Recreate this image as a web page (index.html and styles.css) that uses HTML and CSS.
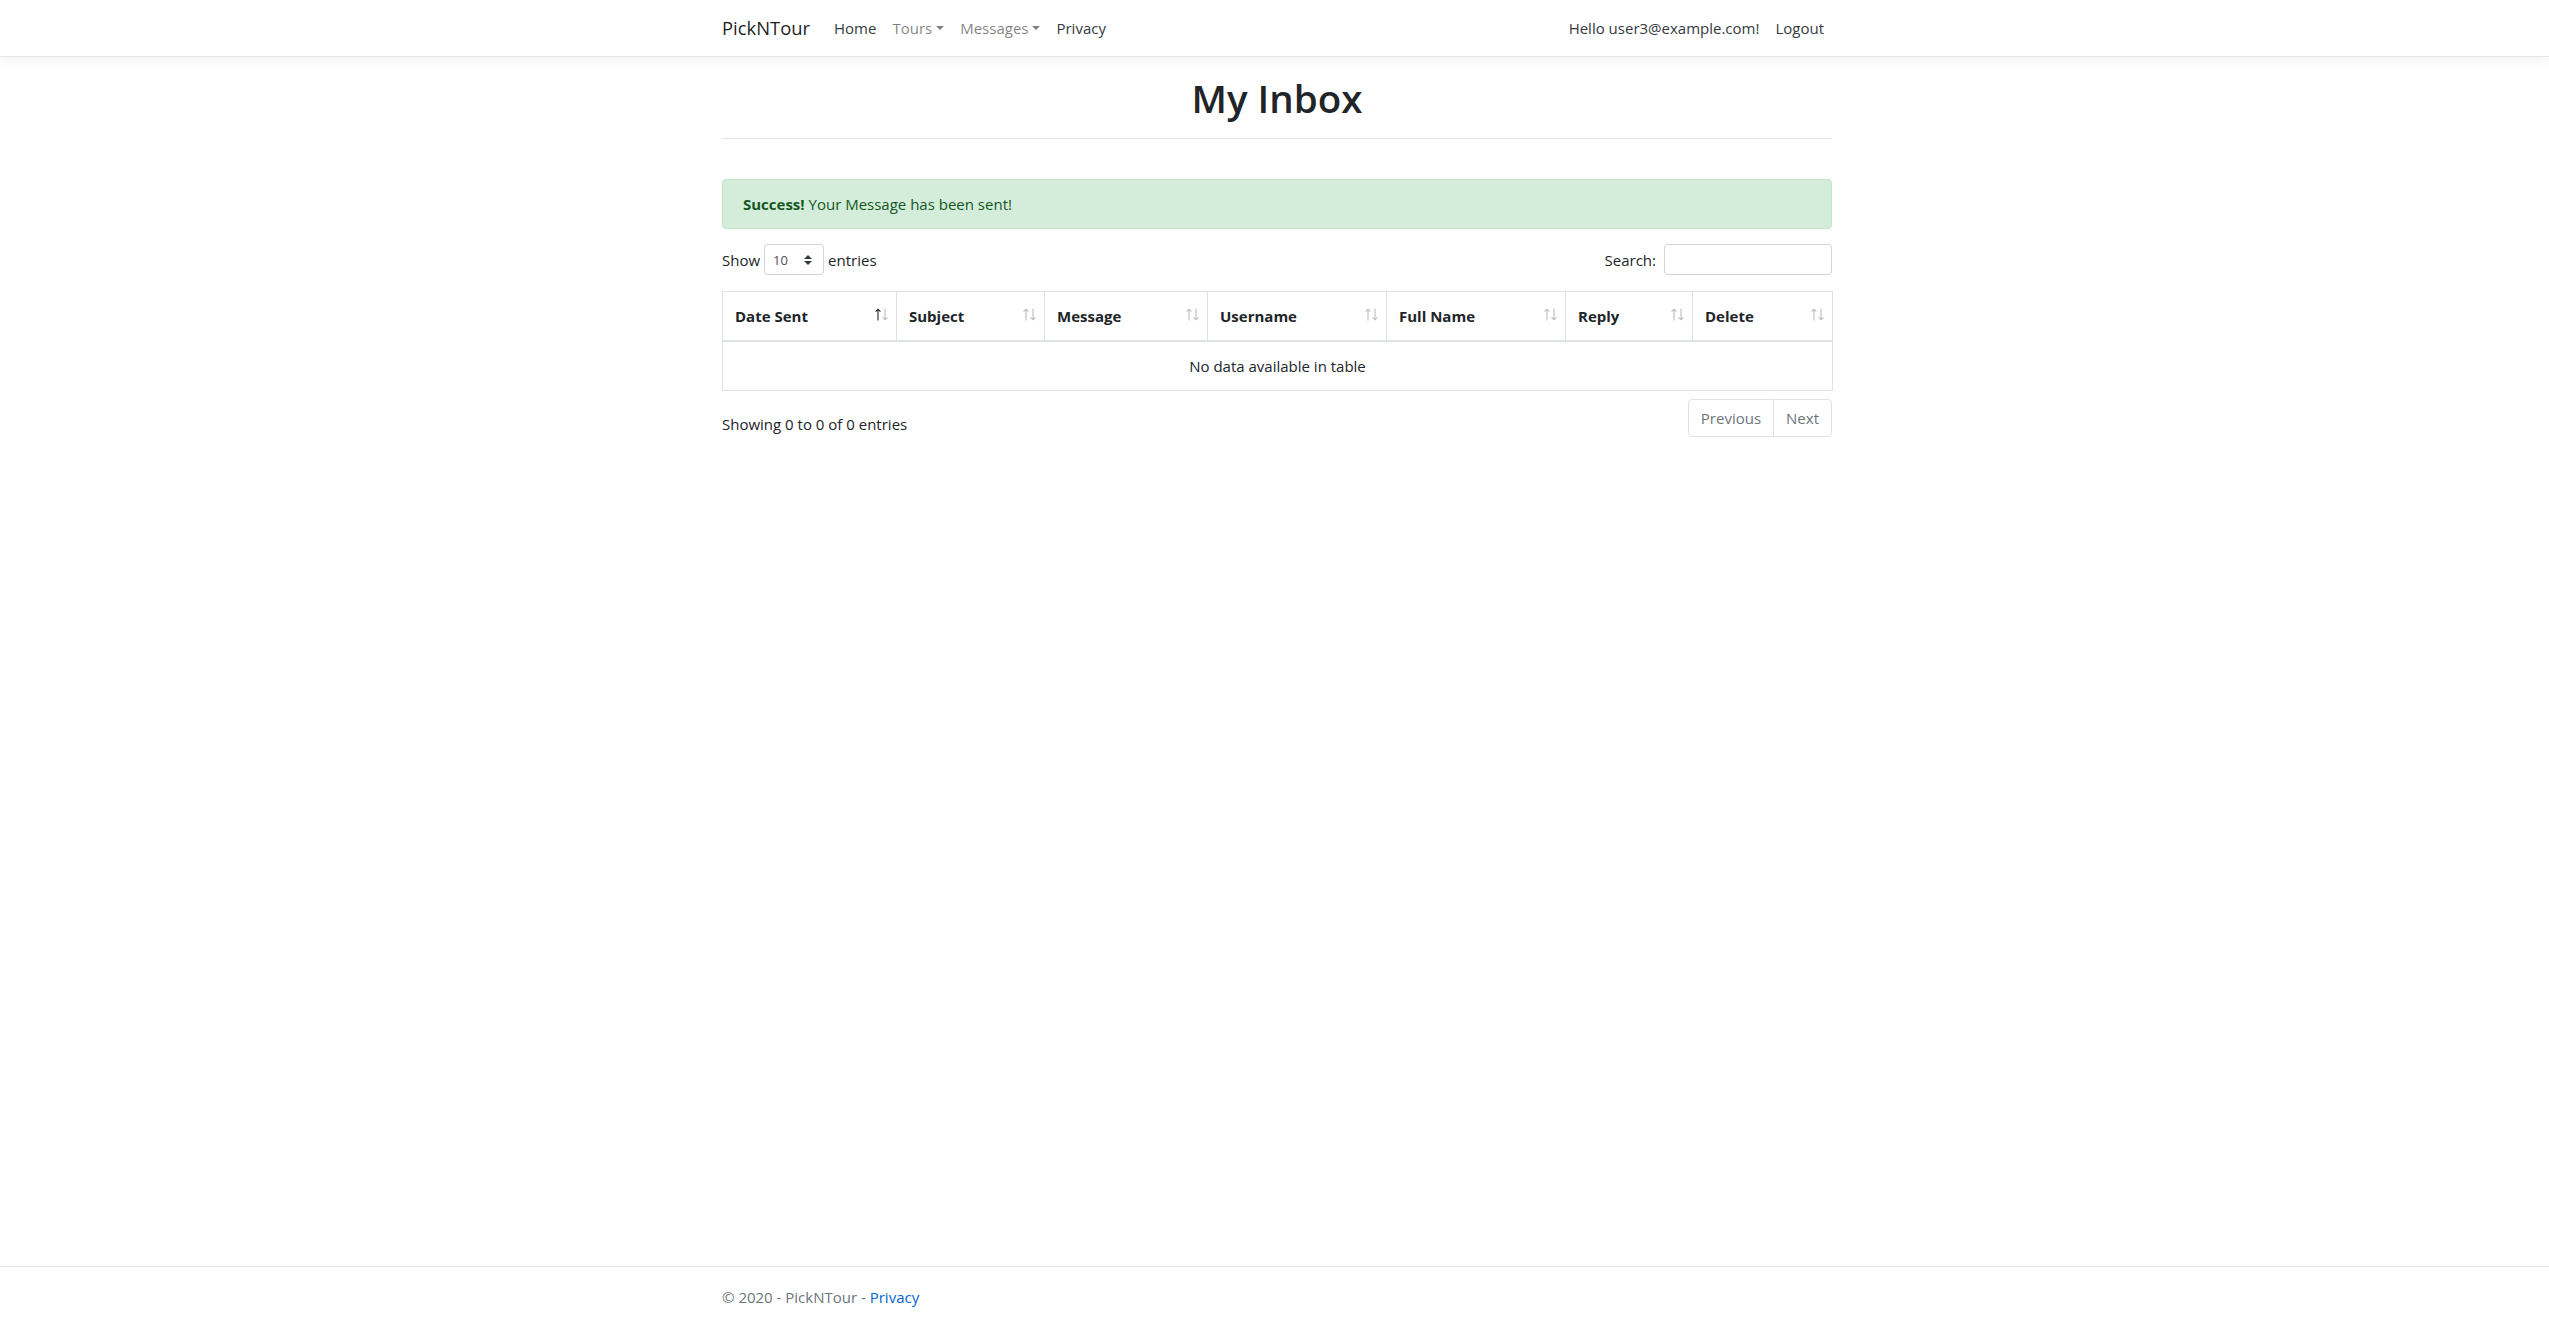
FILE: index.html
```html
<!DOCTYPE html>
<html lang="en">
<head>
<meta charset="utf-8">
<title>My Inbox - PickNTour</title>
<link rel="stylesheet" href="styles.css">
</head>
<body>
<header>
  <nav class="navbar">
    <div class="container nav-container">
      <a class="navbar-brand" href="#">PickNTour</a>
      <ul class="navbar-nav nav-main">
        <li><a class="nav-link text-dark" href="#">Home</a></li>
        <li><a class="nav-link dropdown-toggle" href="#">Tours</a></li>
        <li><a class="nav-link dropdown-toggle" href="#">Messages</a></li>
        <li><a class="nav-link text-dark" href="#">Privacy</a></li>
      </ul>
      <ul class="navbar-nav nav-user">
        <li><a class="nav-link text-dark" href="#">Hello user3@example.com!</a></li>
        <li><button class="nav-link btn-link text-dark" type="button">Logout</button></li>
      </ul>
    </div>
  </nav>
</header>

<div class="container main">
  <h1 class="page-title">My Inbox</h1>
  <hr class="title-rule">

  <div class="alert alert-success"><strong>Success!</strong> Your Message has been sent!</div>

  <div class="dt-top">
    <label class="dt-length">Show
      <span class="select-wrap">
        <select class="dt-select"><option>10</option><option>25</option><option>50</option><option>100</option></select>
        <svg class="select-arrows" width="8" height="10" viewBox="0 0 4 5"><path fill="#343a40" d="M2 0L0 2h4zm0 5L0 3h4z"/></svg>
      </span>
      entries</label>
    <label class="dt-filter">Search:<input class="dt-search" type="search"></label>
  </div>

  <table class="data-table">
    <colgroup>
      <col class="c1"><col class="c2"><col class="c3"><col class="c4"><col class="c5"><col class="c6"><col class="c7">
    </colgroup>
    <thead>
      <tr>
        <th>Date Sent<svg class="sort-icon sort-asc" width="13" height="13" viewBox="0 0 13 13"><g fill="none" stroke-width="1.1"><path class="up" d="M3 12.5V1.2M0.6 3.6L3 1.2 5.4 3.6"/><path class="down" d="M10 0.5v11.3M7.6 9.4L10 11.8 12.4 9.4"/></g></svg></th>
        <th>Subject<svg class="sort-icon" width="13" height="13" viewBox="0 0 13 13"><g fill="none" stroke-width="1.1"><path class="up" d="M3 12.5V1.2M0.6 3.6L3 1.2 5.4 3.6"/><path class="down" d="M10 0.5v11.3M7.6 9.4L10 11.8 12.4 9.4"/></g></svg></th>
        <th>Message<svg class="sort-icon" width="13" height="13" viewBox="0 0 13 13"><g fill="none" stroke-width="1.1"><path class="up" d="M3 12.5V1.2M0.6 3.6L3 1.2 5.4 3.6"/><path class="down" d="M10 0.5v11.3M7.6 9.4L10 11.8 12.4 9.4"/></g></svg></th>
        <th>Username<svg class="sort-icon" width="13" height="13" viewBox="0 0 13 13"><g fill="none" stroke-width="1.1"><path class="up" d="M3 12.5V1.2M0.6 3.6L3 1.2 5.4 3.6"/><path class="down" d="M10 0.5v11.3M7.6 9.4L10 11.8 12.4 9.4"/></g></svg></th>
        <th>Full Name<svg class="sort-icon" width="13" height="13" viewBox="0 0 13 13"><g fill="none" stroke-width="1.1"><path class="up" d="M3 12.5V1.2M0.6 3.6L3 1.2 5.4 3.6"/><path class="down" d="M10 0.5v11.3M7.6 9.4L10 11.8 12.4 9.4"/></g></svg></th>
        <th>Reply<svg class="sort-icon" width="13" height="13" viewBox="0 0 13 13"><g fill="none" stroke-width="1.1"><path class="up" d="M3 12.5V1.2M0.6 3.6L3 1.2 5.4 3.6"/><path class="down" d="M10 0.5v11.3M7.6 9.4L10 11.8 12.4 9.4"/></g></svg></th>
        <th>Delete<svg class="sort-icon" width="13" height="13" viewBox="0 0 13 13"><g fill="none" stroke-width="1.1"><path class="up" d="M3 12.5V1.2M0.6 3.6L3 1.2 5.4 3.6"/><path class="down" d="M10 0.5v11.3M7.6 9.4L10 11.8 12.4 9.4"/></g></svg></th>
      </tr>
    </thead>
    <tbody>
      <tr><td class="dt-empty" colspan="7">No data available in table</td></tr>
    </tbody>
  </table>

  <div class="dt-bottom">
    <div class="dt-info">Showing 0 to 0 of 0 entries</div>
    <ul class="pagination">
      <li class="page-item disabled"><a class="page-link first" href="#">Previous</a></li>
      <li class="page-item disabled"><a class="page-link last" href="#">Next</a></li>
    </ul>
  </div>
</div>

<footer class="footer">
  <div class="container">&copy; 2020 - PickNTour - <a href="#">Privacy</a></div>
</footer>
</body>
</html>
```

FILE: styles.css
```css
* { box-sizing: border-box; }

html { font-size: 16px; }

body {
  margin: 0;
  font-family: "Open Sans", "Liberation Sans", sans-serif;
  font-size: 15px;
  line-height: 24px;
  color: #212529;
  background: #fff;
  display: flex;
  flex-direction: column;
  min-height: 100vh;
}

a { color: #0366d6; text-decoration: none; }

.container {
  width: 100%;
  max-width: 1145px;
  margin: 0 auto;
  padding: 0 15px 0 20px;
}

/* Navbar */
.navbar {
  background: #fff;
  border-bottom: 1px solid #e5e5e5;
  box-shadow: 0 4px 12px rgba(0, 0, 0, 0.05);
  padding: 8px 16px;
  margin-bottom: 16px;
}
.nav-container { display: flex; align-items: center; }
.navbar-brand {
  font-size: 18.4px;
  line-height: 30px;
  padding: 5px 0;
  margin-right: 16px;
  color: rgba(0, 0, 0, 0.9);
}
.navbar-nav { display: flex; list-style: none; margin: 0; padding: 0; }
.nav-main { flex: 1; }
.nav-link {
  display: block;
  padding: 8px;
  color: rgba(0, 0, 0, 0.5);
  font: inherit;
  line-height: 24px;
  background: none;
  border: 0;
  cursor: pointer;
}
.text-dark { color: #343a40; }
.dropdown-toggle::after {
  content: "";
  display: inline-block;
  margin-left: 4px;
  vertical-align: 4px;
  border-top: 4.8px solid;
  border-right: 4.8px solid transparent;
  border-left: 4.8px solid transparent;
  border-bottom: 0;
}

/* Title */
.page-title {
  font-size: 38.5px;
  font-weight: 600;
  line-height: 48px;
  text-align: center;
  margin: 1px 0 8px;
}
.title-rule {
  margin: 16px 0 40px;
  border: 0;
  border-top: 1px solid rgba(0, 0, 0, 0.1);
}

/* Alert */
.alert {
  padding: 12px 20px;
  border: 1px solid #c3e6cb;
  border-radius: 4px;
  background: #d4edda;
  color: #155724;
  margin-bottom: 15px;
}

/* DataTables controls */
.dt-top {
  display: flex;
  justify-content: space-between;
  align-items: center;
  margin-bottom: 16px;
}
.dt-length, .dt-filter {
  display: inline-flex;
  align-items: center;
  gap: 4px;
  height: 31px;
  white-space: nowrap;
}
.select-wrap { position: relative; display: inline-block; height: 31px; }
.dt-select {
  appearance: none;
  -webkit-appearance: none;
  width: 60px;
  height: 31px;
  padding: 4px 28px 4px 8px;
  font-family: inherit;
  font-size: 13px;
  color: #495057;
  background: #fff;
  border: 1px solid #ced4da;
  border-radius: 3.2px;
}
.select-arrows { position: absolute; right: 12px; top: 10.5px; pointer-events: none; }
.dt-search {
  width: 168px;
  height: 31px;
  margin-left: 4px;
  padding: 4px 8px;
  font-family: inherit;
  font-size: 13px;
  border: 1px solid #ced4da;
  border-radius: 3.2px;
}

/* Table */
.data-table {
  width: 100%;
  table-layout: fixed;
  border-collapse: collapse;
  color: #212529;
}
.c1 { width: 174px; }
.c2 { width: 148px; }
.c3 { width: 163px; }
.c4 { width: 179px; }
.c5 { width: 179px; }
.c6 { width: 127px; }
.c7 { width: 140px; }
.data-table th, .data-table td {
  border: 1px solid #dee2e6;
  padding: 12px;
  line-height: 24px;
}
.data-table th {
  position: relative;
  text-align: left;
  font-weight: 700;
  vertical-align: bottom;
  padding-right: 30px;
  border-bottom-width: 2px;
  white-space: nowrap;
}
.sort-icon { position: absolute; right: 8px; top: 16px; }
.sort-icon path { stroke: #212529; opacity: 0.3; }
.sort-asc .up { opacity: 1; }
.dt-empty { text-align: center; vertical-align: top; }

/* Bottom row */
.dt-bottom {
  display: flex;
  justify-content: space-between;
  align-items: flex-start;
  margin-top: 6px;
  padding-bottom: 16px;
}
.dt-info { padding-top: 14.5px; white-space: nowrap; }
.pagination { display: flex; list-style: none; margin: 2px 0; padding: 0; }
.page-link {
  display: block;
  padding: 8px 12px;
  line-height: 20px;
  color: #6c757d;
  background: #fff;
  border: 1px solid #dee2e6;
}
.page-link.first { border-radius: 4px 0 0 4px; }
.page-link.last { margin-left: -1px; border-radius: 0 4px 4px 0; }

/* Footer */
.footer {
  margin-top: auto;
  height: 51px;
  overflow: hidden;
  border-top: 1px solid #e5e5e5;
  line-height: 60px;
  white-space: nowrap;
  color: #6c757d;
}
```
